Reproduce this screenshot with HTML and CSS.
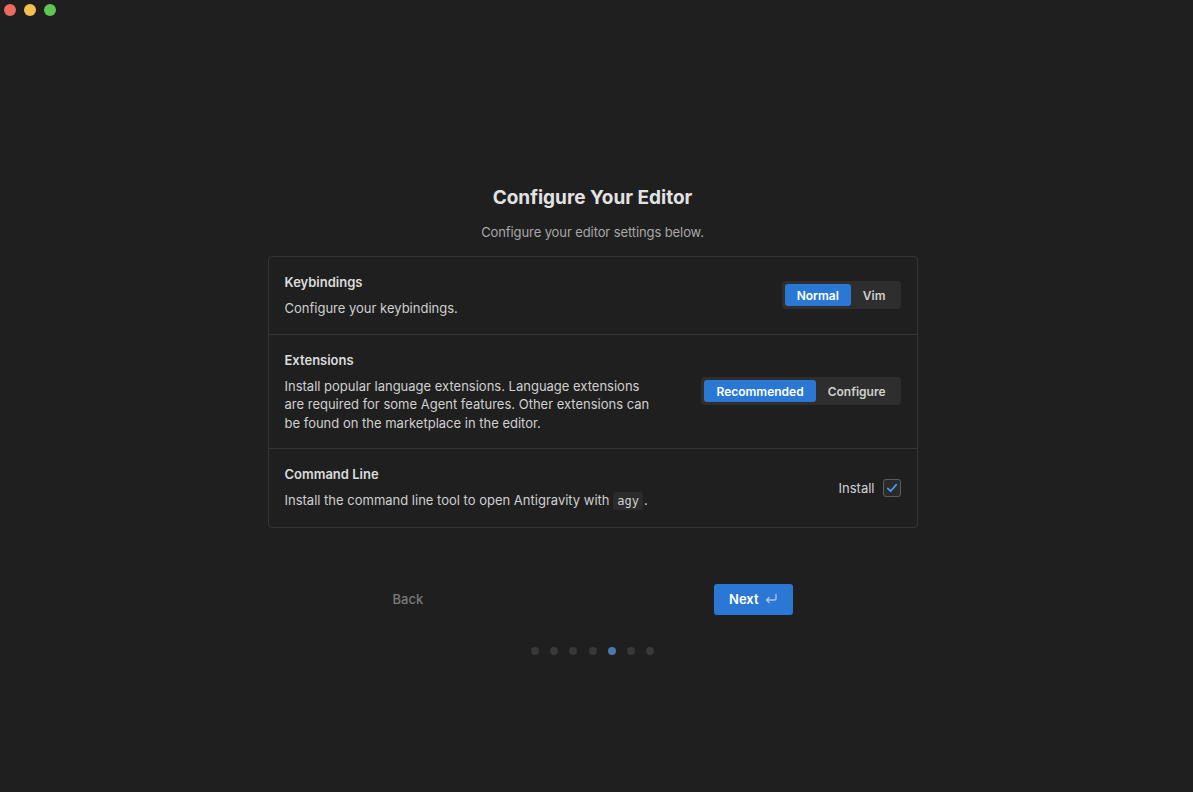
FILE: index.html
```html
<!DOCTYPE html>
<html lang="en">
  <head>
    <meta charset="UTF-8" />
    <meta name="viewport" content="width=device-width, initial-scale=1.0" />
    <title>Configure Your Editor</title>
    <link rel="stylesheet" href="styles.css">
  </head>
  <body>
    <div class="titlebar">
      <span class="light red"></span>
      <span class="light yellow"></span>
      <span class="light green"></span>
    </div>

    <div class="container">
      <h1>Configure Your Editor</h1>
      <p class="subtitle">Configure your editor settings below.</p>

      <div class="card">
        <div class="row">
          <div class="info">
            <h3>Keybindings</h3>
            <p>Configure your keybindings.</p>
          </div>
          <div class="segmented">
            <button class="seg active">Normal</button>
            <button class="seg">Vim</button>
          </div>
        </div>

        <div class="row">
          <div class="info">
            <h3>Extensions</h3>
            <p>
              Install popular language extensions. Language extensions are
              required for some Agent features. Other extensions can be found
              on the marketplace in the editor.
            </p>
          </div>
          <div class="segmented">
            <button class="seg active">Recommended</button>
            <button class="seg">Configure</button>
          </div>
        </div>

        <div class="row">
          <div class="info">
            <h3>Command Line</h3>
            <p>Install the command line tool to open Antigravity with <code>agy</code>.</p>
          </div>
          <label class="check">
            Install
            <span class="box">
              <svg width="12" height="12" viewBox="0 0 12 12">
                <path d="M1.8 6.4 L4.6 9.1 L10.3 2.6" fill="none" stroke="#4a9bf0" stroke-width="1.7" stroke-linecap="round" stroke-linejoin="round" />
              </svg>
            </span>
          </label>
        </div>
      </div>

      <div class="actions">
        <button class="back">Back</button>
        <button class="next">
          Next
          <svg width="14" height="12" viewBox="0 0 14 12">
            <path d="M12 1.5 V5.5 Q12 7 10.5 7 H2.5 M5 4.5 L2.5 7 L5 9.5" fill="none" stroke="#a9cbf3" stroke-width="1.3" stroke-linecap="round" stroke-linejoin="round" />
          </svg>
        </button>
      </div>

      <div class="dots">
        <span class="dot"></span>
        <span class="dot"></span>
        <span class="dot"></span>
        <span class="dot"></span>
        <span class="dot active"></span>
        <span class="dot"></span>
        <span class="dot"></span>
      </div>
    </div>
  </body>
</html>
```

FILE: styles.css
```css
html,
body {
  height: 100%;
}
body {
  margin: 0;
  padding-right: 8px;
  background-color: #1f1f1f;
  font-family: Inter, "Noto Sans", sans-serif;
  color: #d4d4d4;
  font-size: 13px;
}
.titlebar {
  display: flex;
  gap: 8px;
  padding: 4px 0 0 4px;
  height: 24px;
  box-sizing: border-box;
}
.light {
  width: 12px;
  height: 12px;
  border-radius: 50%;
}
.red {
  background-color: #ed6a5e;
}
.yellow {
  background-color: #f5bf4f;
}
.green {
  background-color: #61c554;
}
.container {
  width: 650px;
  margin: 0 auto;
  padding-top: 161px;
  display: flex;
  flex-direction: column;
  align-items: center;
}
h1 {
  margin: 0;
  font-size: 19px;
  font-weight: 700;
  color: #e2e2e2;
  line-height: 26px;
}
.subtitle {
  margin: 12px 0 0;
  color: #a8a8a8;
  line-height: 18px;
  letter-spacing: -0.1px;
}
.card {
  margin-top: 15px;
  width: 100%;
  border: 1px solid #353535;
  border-radius: 4px;
  box-sizing: border-box;
}
.row {
  display: flex;
  justify-content: space-between;
  align-items: center;
  padding: 16px;
  border-bottom: 1px solid #353535;
}
.row:last-child {
  border-bottom: none;
}
.info {
  max-width: 372px;
}
.info h3 {
  margin: 0 0 8px;
  font-size: 13px;
  font-weight: 600;
  color: #dcdcdc;
  line-height: 18px;
}
.info p {
  margin: 0;
  line-height: 18.5px;
  color: #d0d0d0;
}
code {
  font-family: "DejaVu Sans Mono", monospace;
  font-size: 12px;
  background-color: #2b2b2b;
  border-radius: 3px;
  padding: 2px 4px;
  margin: 0 1px 0 0;
}
.segmented {
  display: flex;
  background-color: #2e2e2e;
  border-radius: 4px;
  padding: 3px;
}
.seg {
  border: none;
  background: none;
  color: #d0d0d0;
  font-family: inherit;
  font-size: 12px;
  font-weight: 600;
  height: 22px;
  padding: 0 12px;
  border-radius: 3px;
  cursor: pointer;
}
.seg.active {
  background-color: #2b78d4;
  color: #ffffff;
}
.check {
  display: flex;
  align-items: center;
  gap: 8px;
  color: #d4d4d4;
}
.box {
  width: 16px;
  height: 16px;
  border: 1px solid #5c5c5c;
  border-radius: 3px;
  background-color: #2b2b2b;
  display: flex;
  align-items: center;
  justify-content: center;
}
.actions {
  margin-top: 56px;
  width: 400px;
  display: flex;
  justify-content: space-between;
  align-items: center;
}
.back {
  border: none;
  background: none;
  padding: 0;
  color: #7a7a7a;
  font-family: inherit;
  font-size: 13px;
  font-weight: 500;
}
.next {
  display: flex;
  align-items: center;
  gap: 5px;
  border: none;
  background-color: #2b78d4;
  color: #ffffff;
  font-family: inherit;
  font-size: 13px;
  font-weight: 600;
  height: 31px;
  padding: 0 15px;
  border-radius: 3px;
  cursor: pointer;
}
.dots {
  margin-top: 32px;
  display: flex;
  gap: 11.33px;
}
.dot {
  width: 8px;
  height: 8px;
  border-radius: 50%;
  background-color: #383838;
}
.dot.active {
  background-color: #4a78ad;
}
```
